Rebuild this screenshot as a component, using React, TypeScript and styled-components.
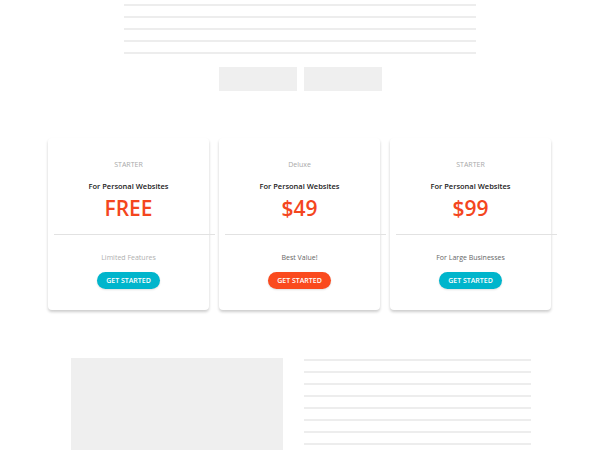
import React from "react";
import styled, { createGlobalStyle } from "styled-components";

const Global = createGlobalStyle`
  html, body { margin: 0; padding: 0; background: #fff; }
  body { font-family: "Open Sans", "Noto Sans", Arial, sans-serif; width: 600px; height: 450px; overflow: hidden; }
`;

const Page = styled.div`
  width: 600px;
  display: flex;
  flex-direction: column;
  align-items: center;
`;

const LineStack = styled.div<{ $w: number; $gap: number }>`
  width: ${(p) => p.$w}px;
  display: flex;
  flex-direction: column;
  gap: ${(p) => p.$gap}px;
`;

const Line = styled.div`
  height: 2px;
  background: #ededed;
`;

const TopSection = styled.section`
  padding-top: 4px;
  display: flex;
  flex-direction: column;
  align-items: center;
`;

const ButtonRow = styled.div`
  margin-top: 13px;
  display: flex;
  gap: 7px;
  padding-left: 1px;
`;

const GhostButton = styled.div`
  width: 78px;
  height: 24px;
  background: #efefef;
`;

const Cards = styled.section`
  align-self: flex-start;
  margin: 47px 0 0 48px;
  display: grid;
  grid-template-columns: repeat(3, 161px);
  column-gap: 10px;
`;

const Card = styled.div`
  background: #fff;
  border-radius: 4px;
  box-shadow: 0 2px 3px rgba(0, 0, 0, 0.2);
  padding: 22px 0 21px;
  display: flex;
  flex-direction: column;
  align-items: center;
  text-align: center;
`;

const Tier = styled.div`
  font-size: 7px;
  line-height: 10px;
  color: #a8a8a8;
`;

const Audience = styled.div`
  margin-top: 10px;
  font-size: 7.5px;
  line-height: 12px;
  font-weight: 600;
  color: #1a1a1a;
`;

const Price = styled.div`
  margin-top: 4px;
  font-size: 21px;
  line-height: 24px;
  font-weight: 600;
  color: #f4461e;
`;

const Divider = styled.div`
  margin-top: 14px;
  align-self: stretch;
  margin-left: 6px;
  margin-right: -6px;
  height: 1px;
  background: #e2e2e2;
`;

const Note = styled.div<{ $muted?: boolean }>`
  margin-top: 18px;
  font-size: 7px;
  line-height: 10px;
  color: ${(p) => (p.$muted ? "#b0b0b0" : "#666")};
`;

const CTA = styled.button<{ $accent: string }>`
  margin-top: 9px;
  height: 17px;
  padding: 0 9px;
  border: none;
  border-radius: 9px;
  background: ${(p) => p.$accent};
  color: #fff;
  font-family: inherit;
  font-size: 7px;
  font-weight: 600;
  line-height: 17px;
  text-transform: uppercase;
  box-shadow: 0 1px 2px rgba(0, 0, 0, 0.12);
  cursor: pointer;
`;

const Bottom = styled.section`
  margin-top: 48px;
  display: flex;
  gap: 21px;
  align-items: flex-start;
  padding-left: 2px;
`;

const ImageBlock = styled.div`
  width: 212px;
  height: 100px;
  background: #efefef;
`;

const BottomLines = styled(LineStack)`
  padding-top: 1px;
`;

const plans = [
  { tier: "STARTER", price: "FREE", note: "Limited Features", muted: true, accent: "#00b5cc" },
  { tier: "Deluxe", price: "$49", note: "Best Value!", muted: false, accent: "#fa4a1e" },
  { tier: "STARTER", price: "$99", note: "For Large Businesses", muted: false, accent: "#00b5cc" },
];

export default function App() {
  return (
    <Page>
      <Global />
      <TopSection>
        <LineStack $w={352} $gap={10}>
          {Array.from({ length: 5 }).map((_, i) => (
            <Line key={i} />
          ))}
        </LineStack>
        <ButtonRow>
          <GhostButton />
          <GhostButton />
        </ButtonRow>
      </TopSection>
      <Cards>
        {plans.map((p, i) => (
          <Card key={i}>
            <Tier>{p.tier}</Tier>
            <Audience>For Personal Websites</Audience>
            <Price>{p.price}</Price>
            <Divider />
            <Note $muted={p.muted}>{p.note}</Note>
            <CTA $accent={p.accent}>Get Started</CTA>
          </Card>
        ))}
      </Cards>
      <Bottom>
        <ImageBlock />
        <BottomLines $w={227} $gap={10}>
          {Array.from({ length: 8 }).map((_, i) => (
            <Line key={i} />
          ))}
        </BottomLines>
      </Bottom>
    </Page>
  );
}
